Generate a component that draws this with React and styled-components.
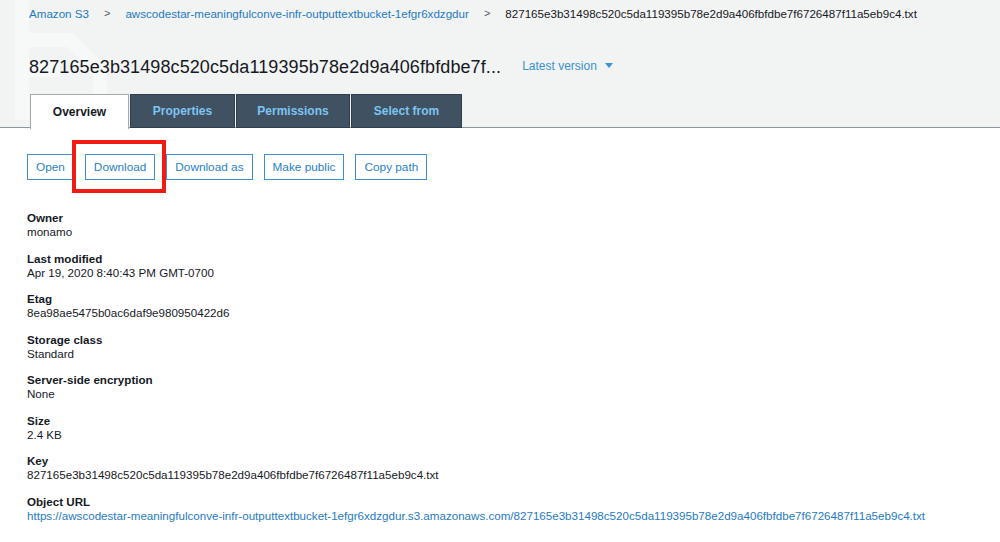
import React from "react";
import styled, { createGlobalStyle } from "styled-components";

const GlobalStyle = createGlobalStyle`
  body {
    margin: 0;
    background: #fff;
    font-family: "Liberation Sans", Arial, sans-serif;
    color: #16191f;
  }
`;

const fields = [
  { label: "Owner", value: "monamo" },
  { label: "Last modified", value: "Apr 19, 2020 8:40:43 PM GMT-0700" },
  { label: "Etag", value: "8ea98ae5475b0ac6daf9e980950422d6" },
  { label: "Storage class", value: "Standard" },
  { label: "Server-side encryption", value: "None" },
  { label: "Size", value: "2.4 KB" },
  { label: "Key", value: "827165e3b31498c520c5da119395b78e2d9a406fbfdbe7f6726487f11a5eb9c4.txt" },
  {
    label: "Object URL",
    value:
      "https://awscodestar-meaningfulconve-infr-outputtextbucket-1efgr6xdzgdur.s3.amazonaws.com/827165e3b31498c520c5da119395b78e2d9a406fbfdbe7f6726487f11a5eb9c4.txt",
    link: true,
  },
];

const tabs = [
  { name: "Overview", width: 99 },
  { name: "Properties", width: 105 },
  { name: "Permissions", width: 114 },
  { name: "Select from", width: 111 },
];
const actions = ["Open", "Download", "Download as", "Make public", "Copy path"];

function App() {
  return (
    <Page>
      <GlobalStyle />
      <Header>
        <Watermark width="110" height="128" viewBox="0 0 110 128">
          <path d="M22 0 V120 M22 40 H70 L100 70 V128 M22 70 H60" stroke="#f7f8f8" strokeWidth="14" fill="none" />
        </Watermark>
        <Crumbs>
          <Crumb>Amazon S3</Crumb>
          <Sep>&gt;</Sep>
          <Crumb>awscodestar-meaningfulconve-infr-outputtextbucket-1efgr6xdzgdur</Crumb>
          <Sep>&gt;</Sep>
          <Current>827165e3b31498c520c5da119395b78e2d9a406fbfdbe7f6726487f11a5eb9c4.txt</Current>
        </Crumbs>
        <TitleRow>
          <Title>827165e3b31498c520c5da119395b78e2d9a406fbfdbe7f...</Title>
          <Version>
            Latest version
            <Caret />
          </Version>
        </TitleRow>
        <Tabs>
          {tabs.map((t, i) => (
            <Tab key={t.name} $active={i === 0} $width={t.width}>{t.name}</Tab>
          ))}
        </Tabs>
      </Header>

      <Body>
        <Actions>
          {actions.map((a) => (
            <ActionWrap key={a}>
              <ActionButton>{a}</ActionButton>
              {a === "Download" && <Highlight />}
            </ActionWrap>
          ))}
        </Actions>

        <Fields>
          {fields.map((f) => (
            <Field key={f.label}>
              <Label>{f.label}</Label>
              {f.link ? <LinkValue>{f.value}</LinkValue> : <Value>{f.value}</Value>}
            </Field>
          ))}
        </Fields>
      </Body>
    </Page>
  );
}

export default App;

const Page = styled.div`
  width: 1000px;
  height: 542px;
  overflow: hidden;
  background: #fff;
`;

const Header = styled.div`
  position: relative;
  background: #f2f3f3;
  border-bottom: 1px solid #8d979c;
  height: 128px;
  box-sizing: border-box;
  padding: 6px 0 0 29px;
  display: flex;
  flex-direction: column;
`;

const Watermark = styled.svg`
  position: absolute;
  left: 0;
  top: 0;
  pointer-events: none;
`;

const Crumbs = styled.div`
  position: relative;
  display: flex;
  align-items: center;
  font-size: 11.6px;
  height: 15px;
  line-height: 15px;
  white-space: nowrap;
`;

const Crumb = styled.span`
  color: #1f7ac3;
`;

const Sep = styled.span`
  color: #545b64;
  margin: 0 15px 0 15px;
  font-size: 11px;
`;

const Current = styled.span`
  color: #16191f;
`;

const TitleRow = styled.div`
  position: relative;
  display: flex;
  align-items: center;
  margin-top: 36px;
  height: 22px;
`;

const Title = styled.h1`
  margin: 0;
  font-size: 18px;
  font-weight: 400;
  color: #16191f;
  letter-spacing: 0.1px;
`;

const Version = styled.span`
  display: flex;
  align-items: center;
  margin-left: 21px;
  margin-top: -4px;
  font-size: 12px;
  color: #3a91d6;
`;

const Caret = styled.span`
  margin-left: 8px;
  width: 0;
  height: 0;
  border-left: 4px solid transparent;
  border-right: 4px solid transparent;
  border-top: 5px solid #3a91d6;
`;

const Tabs = styled.div`
  position: relative;
  display: flex;
  margin-top: 16px;
  margin-left: 1px;
  height: 34px;
`;

const Tab = styled.div`
  box-sizing: border-box;
  display: flex;
  align-items: center;
  justify-content: center;
  white-space: nowrap;
  width: ${(p) => p.$width}px;
  height: ${(p) => (p.$active ? "35px" : "34px")};
  margin-right: 1px;
  font-size: 12px;
  font-weight: 700;
  background: ${(p) => (p.$active ? "#fff" : "#405261")};
  color: ${(p) => (p.$active ? "#16191f" : "#7cc4f2")};
  border: 1px solid ${(p) => (p.$active ? "#a3aaae" : "#2f3e4a")};
  border-bottom: ${(p) => (p.$active ? "none" : "1px solid #2f3e4a")};
`;

const Body = styled.div`
  padding: 26px 0 0 27px;
`;

const Actions = styled.div`
  display: flex;
  gap: 11px;
`;

const ActionWrap = styled.div`
  position: relative;
`;

const ActionButton = styled.button`
  box-sizing: border-box;
  height: 26px;
  padding: 0 8px;
  background: #fff;
  border: 1px solid #3f8ed0;
  color: #2a7fc7;
  font-family: "Liberation Sans", Arial, sans-serif;
  font-size: 11.8px;
  cursor: pointer;
`;

const Highlight = styled.div`
  position: absolute;
  left: -13px;
  top: -14px;
  width: 94px;
  height: 53px;
  box-sizing: border-box;
  border: 4px solid #f01c14;
  pointer-events: none;
`;

const Fields = styled.div`
  margin-top: 31px;
  display: flex;
  flex-direction: column;
  gap: 12.5px;
`;

const Field = styled.div`
  display: flex;
  flex-direction: column;
  line-height: 14px;
  font-size: 11.6px;
`;

const Label = styled.div`
  font-weight: 700;
  color: #16191f;
`;

const Value = styled.div`
  color: #16191f;
`;

const LinkValue = styled.a`
  color: #1f7ac3;
  text-decoration: none;
  white-space: nowrap;
`;
